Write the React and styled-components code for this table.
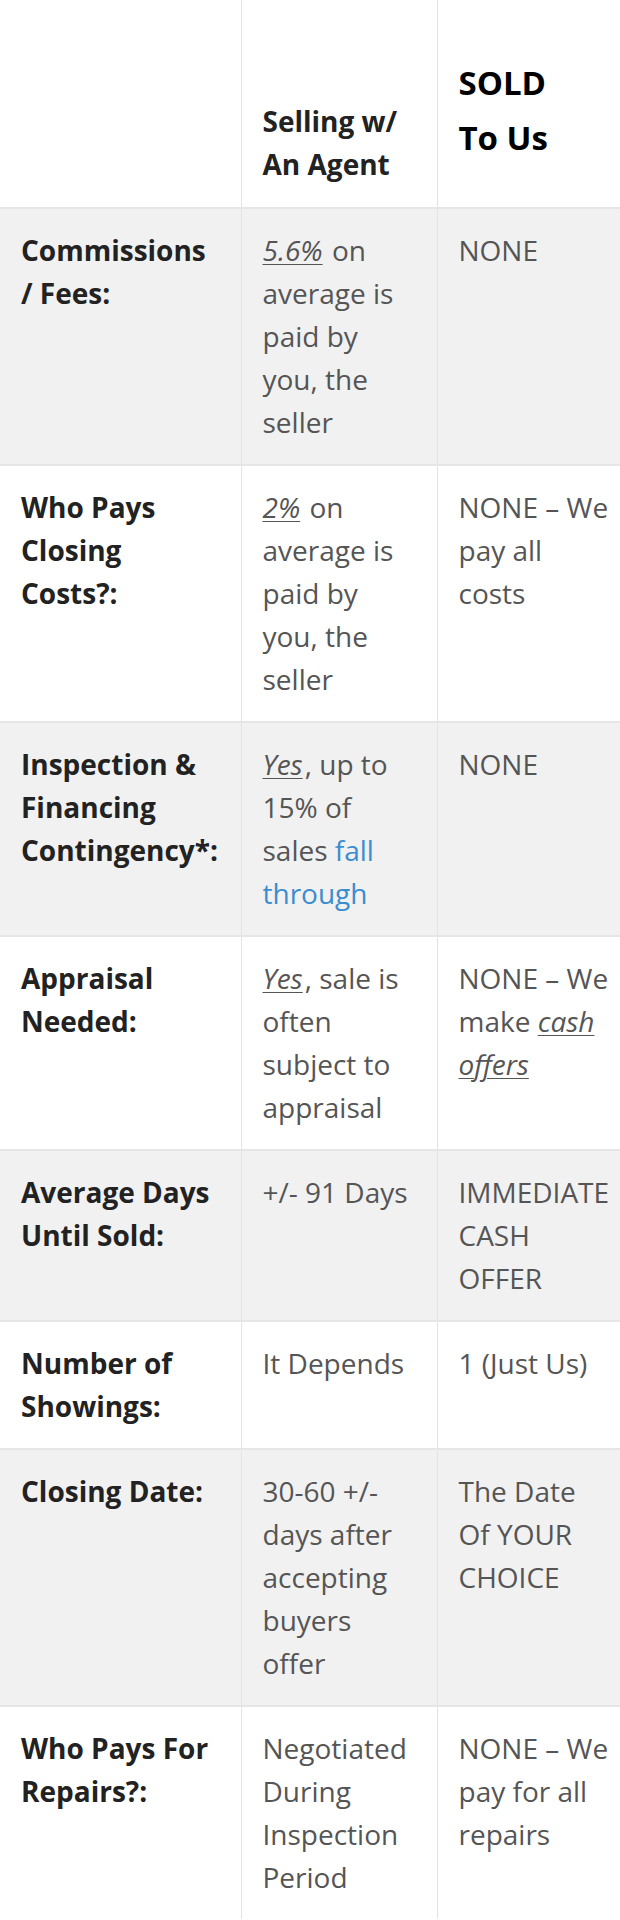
import React, { Component } from 'react';
import styled, { createGlobalStyle } from 'styled-components';

const GlobalStyle = createGlobalStyle`
  html, body {
    margin: 0;
    padding: 0;
    background: #ffffff;
  }
  body {
    font-family: 'Open Sans', 'Liberation Sans', sans-serif;
    overflow: hidden;
  }
`;

const Page = styled.div`
  width: 620px;
  overflow: hidden;
`;
const Table = styled.table`
  width: 633px;
  table-layout: fixed;
  border-collapse: collapse;
  border-spacing: 0;
  font-size: 28px;
  line-height: 43px;
  color: #555555;
`;
const HeadRow = styled.tr`
  height: 208px;
  background: #ffffff;
`;
const HeadCell = styled.th`
  vertical-align: bottom;
  text-align: left;
  padding: 0 21px 21px;
  font-weight: 700;
  color: #222222;
  border-left: ${props => (props.first ? 'none' : '1px solid #e4e4e4')};
`;
const SoldTitle = styled.div`
  font-size: 33px;
  line-height: 55px;
  color: #000000;
  margin-bottom: 21px;
`;
const Row = styled.tr`
  background: ${props => (props.shaded ? '#f1f1f1' : '#ffffff')};
  border-top: 2px solid #e6e6e6;
`;
const Cell = styled.td`
  vertical-align: top;
  padding: 20px 21px;
  border-left: 1px solid #e4e4e4;
`;
const LabelCell = styled.td`
  vertical-align: top;
  padding: 20px 21px;
  font-weight: 700;
  color: #222222;
`;
const Note = styled.em`
  display: inline-block;
  padding-right: 2px;
  text-decoration: underline;
  text-decoration-thickness: 1px;
  text-underline-offset: 3px;
`;
const Link = styled.a`
  color: #3a8dd0;
  text-decoration: none;
`;

const rows = [
  {
    label: 'Commissions / Fees:',
    agent: (
      <>
        <Note>5.6%</Note> on average is paid by you, the seller
      </>
    ),
    us: 'NONE'
  },
  {
    label: 'Who Pays Closing Costs?:',
    agent: (
      <>
        <Note>2%</Note> on average is paid by you, the seller
      </>
    ),
    us: 'NONE – We pay all costs'
  },
  {
    label: 'Inspection & Financing Contingency*:',
    agent: (
      <>
        <Note>Yes</Note>, up to 15% of sales <Link href="#">fall through</Link>
      </>
    ),
    us: 'NONE'
  },
  {
    label: 'Appraisal Needed:',
    agent: (
      <>
        <Note>Yes</Note>, sale is often subject to appraisal
      </>
    ),
    us: (
      <>
        NONE – We make <Note>cash</Note> <Note>offers</Note>
      </>
    )
  },
  {
    label: 'Average Days Until Sold:',
    agent: '+/- 91 Days',
    us: 'IMMEDIATE CASH OFFER'
  },
  {
    label: 'Number of Showings:',
    agent: 'It Depends',
    us: '1 (Just Us)'
  },
  {
    label: 'Closing Date:',
    agent: '30-60 +/- days after accepting buyers offer',
    us: 'The Date Of YOUR CHOICE'
  },
  {
    label: 'Who Pays For Repairs?:',
    agent: 'Negotiated During Inspection Period',
    us: 'NONE – We pay for all repairs'
  }
];

class ComparisonRow extends Component {
  render() {
    const { label, agent, us, shaded } = this.props;
    return (
      <Row shaded={shaded}>
        <LabelCell>{label}</LabelCell>
        <Cell>{agent}</Cell>
        <Cell>{us}</Cell>
      </Row>
    );
  }
}

export default class App extends Component {
  render() {
    return (
      <Page>
        <GlobalStyle />
        <Table>
          <colgroup>
            <col style={{ width: 241 }} />
            <col style={{ width: 196 }} />
            <col style={{ width: 196 }} />
          </colgroup>
          <thead>
            <HeadRow>
              <HeadCell first />
              <HeadCell>Selling w/ An Agent</HeadCell>
              <HeadCell>
                <SoldTitle>
                  SOLD
                  <br />
                  To Us
                </SoldTitle>
              </HeadCell>
            </HeadRow>
          </thead>
          <tbody>
            {rows.map((row, ind) => (
              <ComparisonRow
                key={row.label}
                label={row.label}
                agent={row.agent}
                us={row.us}
                shaded={ind % 2 === 0}
              />
            ))}
          </tbody>
        </Table>
      </Page>
    );
  }
}
